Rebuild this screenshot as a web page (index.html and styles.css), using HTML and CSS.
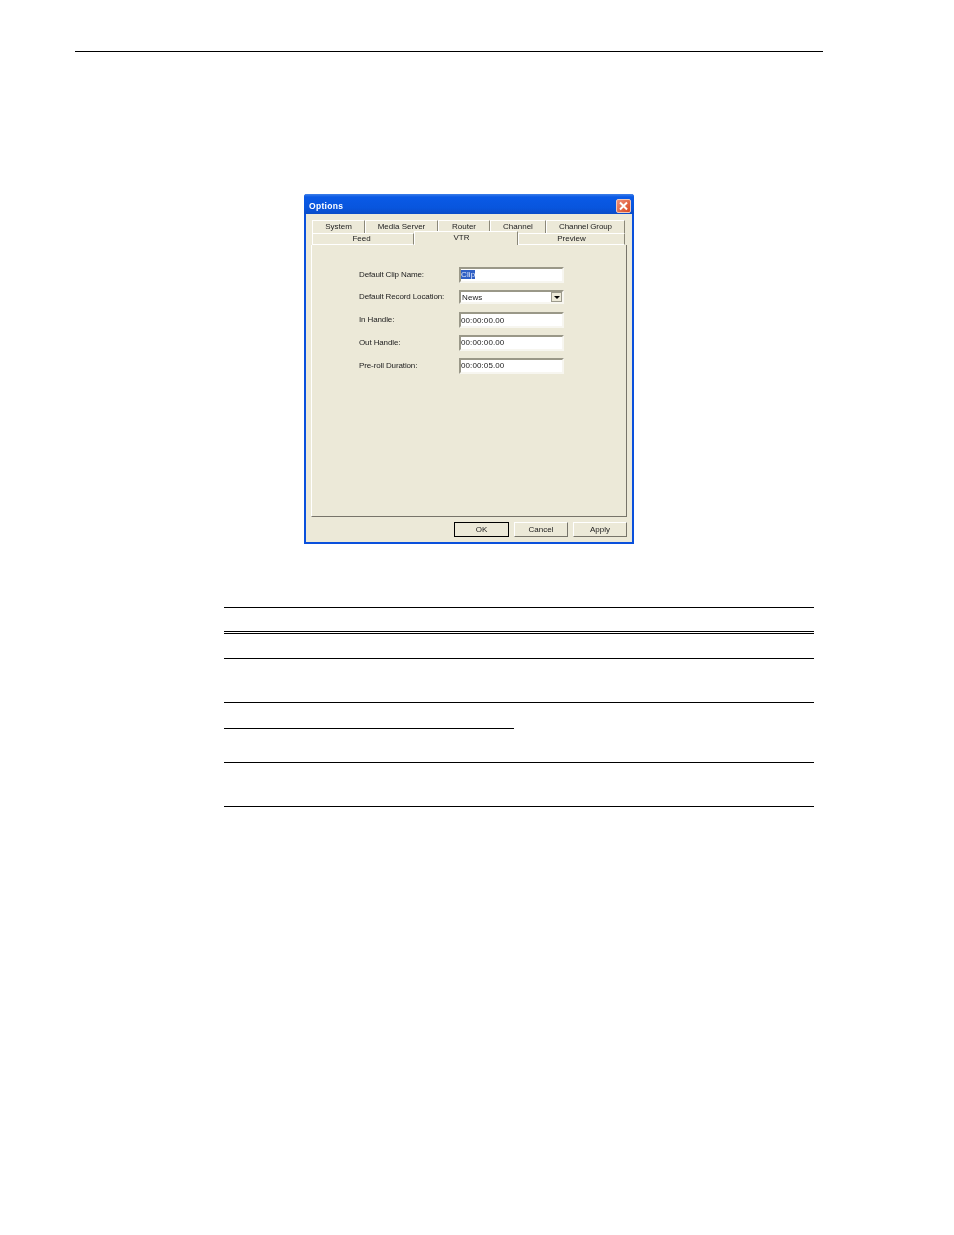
FILE: index.html
```html
<!DOCTYPE html>
<html lang="en">
<head>
    <meta charset="UTF-8">
    <meta name="viewport" content="width=device-width, initial-scale=1.0">
    <title>Options</title>
    <link rel="stylesheet" href="styles.css">
</head>
<body>
    <div class="page-rule"></div>

    <!-- Options Dialog -->
    <div class="dialog">
        <div class="title-bar">
            <span class="title-text">Options</span>
            <span class="close-button">
                <svg width="15" height="14" viewBox="0 0 15 14">
                    <path d="M4 3.5 L11 10.5 M11 3.5 L4 10.5" stroke="#fff" stroke-width="2" fill="none"/>
                </svg>
            </span>
        </div>

        <div class="dialog-body">
            <div class="tab-row tab-row-top">
                <div class="tab tab-system">System</div>
                <div class="tab tab-media">Media Server</div>
                <div class="tab tab-router">Router</div>
                <div class="tab tab-channel">Channel</div>
                <div class="tab tab-group">Channel Group</div>
            </div>
            <div class="tab-row tab-row-bottom">
                <div class="tab tab-feed">Feed</div>
                <div class="tab tab-vtr">VTR</div>
                <div class="tab tab-preview">Preview</div>
            </div>

            <div class="tab-panel">
                <div class="form-row">
                    <label class="form-label">Default Clip Name:</label>
                    <div class="field"><span class="selected-text">Clip</span></div>
                </div>
                <div class="form-row">
                    <label class="form-label">Default Record Location:</label>
                    <div class="field field-select">
                        <span>News</span>
                        <span class="select-arrow"></span>
                    </div>
                </div>
                <div class="form-row">
                    <label class="form-label">In Handle:</label>
                    <div class="field">00:00:00.00</div>
                </div>
                <div class="form-row">
                    <label class="form-label">Out Handle:</label>
                    <div class="field">00:00:00.00</div>
                </div>
                <div class="form-row">
                    <label class="form-label">Pre-roll Duration:</label>
                    <div class="field">00:00:05.00</div>
                </div>
            </div>

            <div class="button-row">
                <button class="dialog-button default-button">OK</button>
                <button class="dialog-button">Cancel</button>
                <button class="dialog-button">Apply</button>
            </div>
        </div>
    </div>

    <!-- Table rules -->
    <div class="rule-table">
        <div class="rule-row row-head"></div>
        <div class="rule-row row-double"></div>
        <div class="rule-row row-tall"></div>
        <div class="rule-row row-half"></div>
        <div class="rule-row row-mid"></div>
        <div class="rule-row row-tall"></div>
    </div>
</body>
</html>
```

FILE: styles.css
```css
/* Basic reset */
* {
    margin: 0;
    padding: 0;
    box-sizing: border-box;
}

body {
    font-family: "Liberation Sans", Arial, sans-serif;
    background-color: #fff;
    color: #000;
}

.page-rule {
    width: 748px;
    height: 1px;
    margin: 51px 0 0 75px;
    background-color: #000;
}

/* Dialog */
.dialog {
    width: 330px;
    height: 350px;
    margin: 142px 0 0 304px;
    border: 2px solid #0a50dc;
    border-top: 0;
    border-radius: 3px 3px 0 0;
    background-color: #ece9d8;
    font-size: 8px;
    color: #222;
    filter: blur(0.3px);
}

.title-bar {
    display: flex;
    align-items: center;
    justify-content: space-between;
    height: 20px;
    margin: 0 -2px;
    padding: 3px 3px 0 5px;
    border-radius: 3px 3px 0 0;
    background: linear-gradient(#3f7fe8 0, #0a5ae6 15%, #0855dd 70%, #0a4cc8 100%);
}

.title-text {
    color: #fff;
    font-weight: bold;
    font-size: 8.5px;
    letter-spacing: 0.3px;
}

.close-button {
    display: flex;
    width: 15px;
    height: 14px;
    border: 1px solid #f0c8b8;
    border-radius: 2px;
    background: linear-gradient(135deg, #f0907a, #d8481f);
}

.close-button svg {
    margin: -1px;
}

.dialog-body {
    padding: 6px 5px 0 5px;
}

/* Tabs */
.tab-row {
    display: flex;
    margin-left: 1px;
}

.tab {
    text-align: center;
    border-top: 1px solid #fff;
    border-left: 1px solid #fff;
    border-right: 1px solid #8a8778;
}

.tab-row-top {
    height: 13px;
    line-height: 12px;
}

.tab-row-bottom {
    height: 12px;
    line-height: 10px;
}

.tab-system { width: 53px; }
.tab-media { width: 73px; }
.tab-router { width: 52px; }
.tab-channel { width: 56px; }
.tab-group { width: 79px; letter-spacing: -0.1px; }
.tab-feed { width: 102px; padding-right: 3px; border-bottom: 1px solid #fff; }
.tab-preview { width: 107px; border-bottom: 1px solid #fff; }

.tab-vtr {
    position: relative;
    width: 104px;
    height: 14px;
    margin-top: -2px;
    padding-right: 9px;
    line-height: 12px;
    background-color: #ece9d8;
    z-index: 1;
}

.tab-panel {
    display: flex;
    flex-direction: column;
    height: 272px;
    padding-top: 21.5px;
    border-left: 1px solid #fff;
    border-right: 1px solid #77746a;
    border-bottom: 1px solid #77746a;
}

/* Form */
.form-row {
    display: flex;
    align-items: center;
    height: 16px;
    margin-bottom: 6.75px;
}

.form-label {
    width: 147px;
    padding-left: 47px;
    padding-bottom: 1px;
    letter-spacing: -0.12px;
    white-space: nowrap;
}

.field {
    display: flex;
    align-items: center;
    justify-content: space-between;
    width: 105px;
    height: 16px;
    padding-left: 0;
    letter-spacing: 0.1px;
    background-color: #fff;
    border: 2px solid #fff;
    border-top-color: #9a9888;
    border-left-color: #9a9888;
    border-right-color: #f7f6f0;
    border-bottom-color: #f7f6f0;
}

.selected-text {
    background-color: #2f5fc4;
    color: #dfe6f8;
    line-height: 9px;
}

.field-select {
    height: 14px;
    padding-left: 1px;
    padding-right: 0;
}

.select-arrow {
    position: relative;
    width: 11px;
    height: 10px;
    background-color: #ece9d8;
    border: 1px solid #9c9a8c;
}

.select-arrow::after {
    content: "";
    position: absolute;
    left: 2px;
    top: 3px;
    border-left: 3px solid transparent;
    border-right: 3px solid transparent;
    border-top: 3px solid #000;
}

/* Buttons */
.button-row {
    display: flex;
    justify-content: flex-end;
    gap: 5px;
    margin-top: 5px;
}

.dialog-button {
    width: 54px;
    height: 15px;
    font: inherit;
    color: inherit;
    background-color: #ece9d8;
    border: 1px solid #fff;
    border-right-color: #77746a;
    border-bottom-color: #77746a;
}

.default-button {
    width: 55px;
    border-color: #000;
}

/* Table rules */
.rule-table {
    width: 590px;
    margin: 63px 0 0 224px;
    border-bottom: 1px solid #000;
}

.rule-row {
    border-top: 1px solid #000;
}

.row-head { height: 24px; }
.row-double { height: 27px; border-top: 3px double #000; }
.row-tall { height: 44px; }
.row-half { height: 26px; }
.row-mid { height: 34px; margin-right: 300px; }
```
